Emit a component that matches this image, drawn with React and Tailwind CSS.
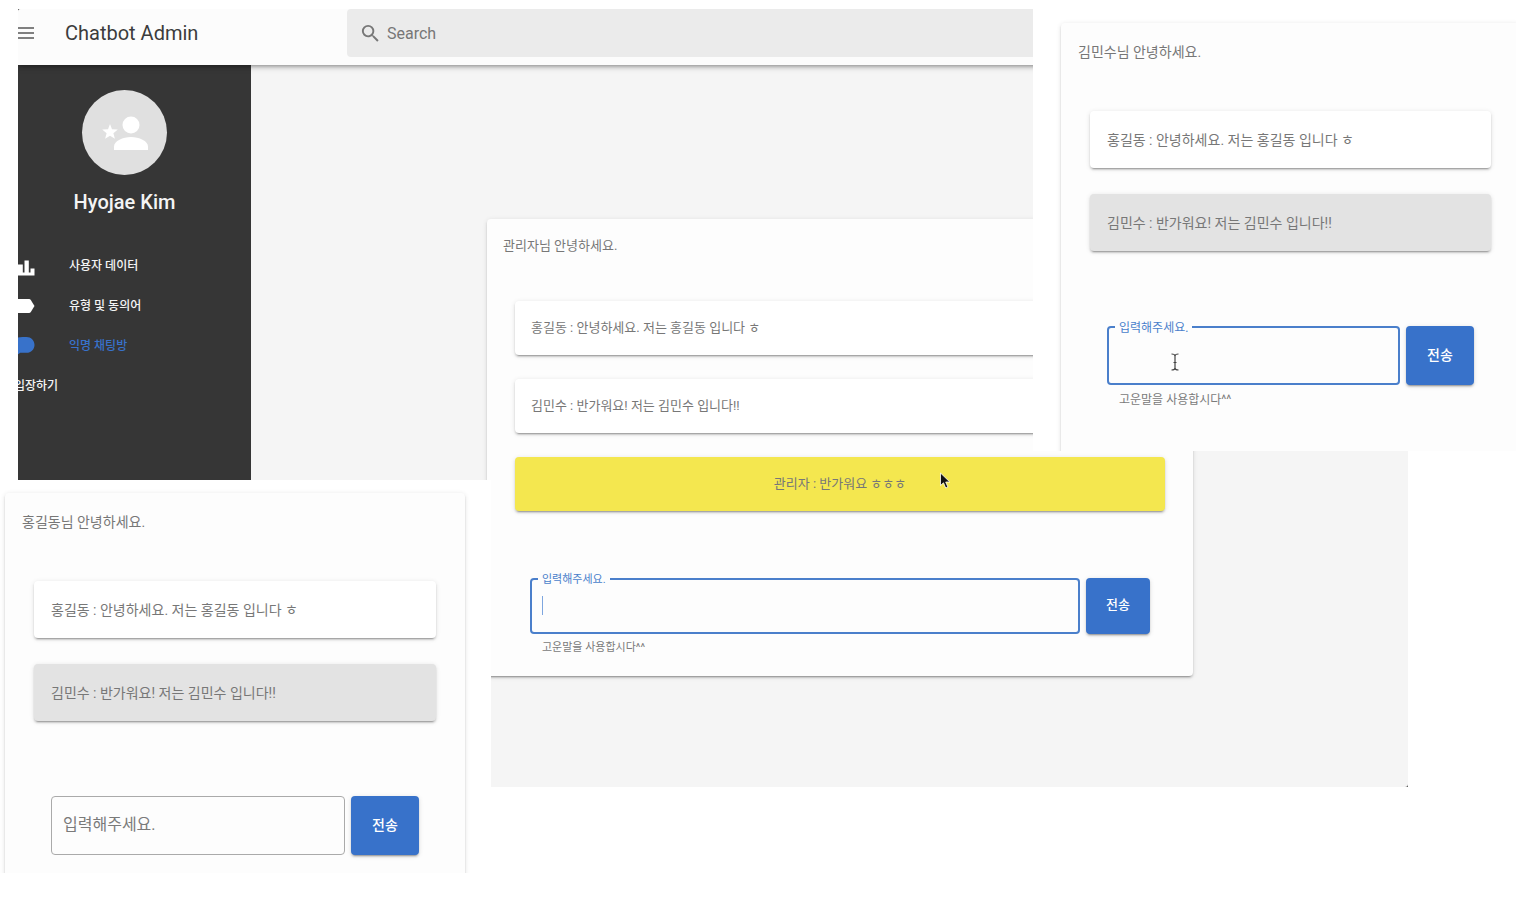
import React, { useState } from 'react';

const elevation =
  'shadow-[0_3px_1px_-2px_rgba(0,0,0,0.2),0_2px_2px_0_rgba(0,0,0,0.14),0_1px_5px_0_rgba(0,0,0,0.12)]';

const hong = { id: 1, text: '홍길동 : 안녕하세요. 저는 홍길동 입니다 ㅎ' };
const kim = { id: 2, text: '김민수 : 반가워요! 저는 김민수 입니다!!' };
const admin = { id: 3, text: '관리자 : 반가워요 ㅎㅎㅎ' };

const menu = [
  { icon: 'poll', label: '사용자 데이터' },
  { icon: 'label', label: '유형 및 동의어' },
  { icon: 'chat', label: '익명 채팅방', active: true },
];

const iconPaths = {
  poll: 'M2 21.500V14H5V18.500H7.500V10.500H12.300V18.500H14V6.500H18.300V18.500H20V14.500H24V21.500Z',
  label: 'M2 5H18.600C19.300 5 19.900 5.300 20.300 5.900L24 12L20.300 18.100C19.900 18.700 19.300 19 18.600 19H2Z',
  chat: 'M12 3C5.400 3 0 6.500 0 11C0 13.600 1.600 15.800 4.200 17.200C4.200 18.500 3.200 20.500 1.500 22C4.500 21.500 8 20.500 9.700 18.800H16C20.500 18.800 24 15.400 24 11C24 6.500 20.500 3 16 3Z',
};

function MessageInput({ id, compact, focused, caret }) {
  const [value, setValue] = useState('');
  const floating = focused || value !== '';

  return (
    <form className="flex items-start gap-1.5" onSubmit={(e) => e.preventDefault()}>
      <div className="relative min-w-0 flex-1">
        <input
          id={id}
          type="text"
          value={value}
          onChange={(e) => setValue(e.target.value)}
          className={`block w-full rounded-[4px] bg-transparent px-3 text-base text-gray-600 outline-none ${
            compact ? 'h-14' : 'h-[59px]'
          } ${focused ? 'border-2 border-[#4a7fcb]' : 'border border-[#aaaaaa]'}`}
        />
        <label
          htmlFor={id}
          className={
            floating
              ? `absolute -top-1.5 left-2 bg-[#fdfdfd] pl-1 pr-1 leading-4 text-[#4a7fcb] ${
                  compact ? 'text-[11px]' : 'text-xs'
                }`
              : 'absolute left-3 top-[17px] text-base leading-6 text-[#7a7a7a]'
          }
        >
          입력해주세요.
        </label>
        {caret && <span className="absolute left-3 top-[18px] h-[19px] w-px bg-[#7ea6df]" />}
        {focused && (
          <p className={`pl-3 leading-4 text-[#7a7a7a] ${compact ? 'pt-1.5 text-[11px]' : 'pt-[7px] text-xs'}`}>
            고운말을 사용합시다^^
          </p>
        )}
      </div>
      <button
        type="submit"
        className={`rounded-[4px] bg-[#3872ca] pb-0.5 font-medium text-white ${elevation} ${
          compact ? 'h-14 w-16 text-[13px]' : 'h-[59px] w-[68px] text-sm'
        }`}
      >
        전송
      </button>
    </form>
  );
}

function ChatRoom({ id, name, messages, compact, focused, caret }) {
  return (
    <section
      className={`rounded-[4px] bg-[#fdfdfd] text-[#777777] ${elevation} ${
        compact ? 'px-7 pt-[17px] pb-5 text-[13px]' : 'px-[29px] pt-[19px] pb-14 text-sm'
      }`}
    >
      <h2 className="-ml-3 leading-5">{name}님 안녕하세요.</h2>
      <ul className={compact ? 'mt-[45px] space-y-6' : 'mt-[49px] space-y-[26px]'}>
        {messages.map((m) => (
          <li
            key={m.id}
            className={`flex items-center rounded-[4px] ${elevation} ${
              compact ? 'h-[54px] px-4' : 'h-[57px] px-[17px]'
            } ${m.color || 'bg-white'}`}
          >
            {m.text}
          </li>
        ))}
      </ul>
      <div className={compact ? 'mt-[67px] px-[15px]' : 'mt-[75px] px-[17px]'}>
        <MessageInput id={id} compact={compact} focused={focused} caret={caret} />
      </div>
    </section>
  );
}

function Header() {
  return (
    <header className="relative z-10 flex h-14 items-start bg-[#fcfcfc] shadow-[0_2px_4px_-1px_rgba(0,0,0,0.35),0_3px_6px_0_rgba(0,0,0,0.14)]">
      <button type="button" aria-label="menu" className="mt-[18px] w-4">
        <svg viewBox="0 0 16 12" className="h-3 w-4" fill="#808080">
          <path d="M0 0H16V2H0ZM0 5H16V7H0ZM0 10H16V12H0Z" />
        </svg>
      </button>
      <h1 className="ml-[31px] mt-2.5 w-[282px] text-xl leading-7 text-[#3c3c3c]">Chatbot Admin</h1>
      <div className="flex h-12 flex-1 items-center rounded-[4px] bg-[#ebebeb] pl-3">
        <svg viewBox="0 0 24 24" className="h-[23px] w-[23px]" fill="#777777">
          <path d="M15.5 14h-.79l-.28-.27A6.47 6.47 0 0 0 16 9.5 6.5 6.5 0 1 0 9.5 16c1.61 0 3.09-.59 4.23-1.57l.27.28v.79l5 4.99L20.49 19l-4.99-5zm-6 0C7.01 14 5 11.99 5 9.5S7.01 5 9.5 5 14 7.01 14 9.5 11.99 14 9.5 14z" />
        </svg>
        <input
          type="search"
          aria-label="Search"
          placeholder="Search"
          className="ml-[5px] flex-1 bg-transparent pt-0.5 text-base placeholder-[#777777] outline-none"
        />
      </div>
    </header>
  );
}

function Sidebar() {
  return (
    <aside className="w-[233px] shrink-0 overflow-hidden bg-[#363636] text-[#f4f4f4]">
      <div className="-ml-5 pt-[25px]">
        <div className="mx-auto flex h-[85px] w-[85px] items-center justify-center rounded-full bg-[#e0e0e0]">
          <svg viewBox="0 0 46 34" className="h-[34px] w-[46px]" fill="#ffffff">
            <circle cx="29" cy="9" r="8.5" />
            <path d="M12 34V30.500C12 25 21 21 29 21S46 25 46 30.500V34Z" />
            <path d="M8 8L10 13.200L15.800 13.500L11.400 17.200L12.900 22.800L8 19.700L3.100 22.800L4.600 17.200L0.200 13.500L6 13.200Z" />
          </svg>
        </div>
        <p className="mt-[13px] text-center text-xl font-medium leading-7">Hyojae Kim</p>
        <nav className="mt-[30px] text-xs font-medium">
          {menu.map((item) => (
            <a
              key={item.label}
              href="#"
              className={`flex h-10 items-center pl-3 ${item.active ? 'text-[#3872ca]' : ''}`}
            >
              <svg viewBox="0 0 24 24" className="h-6 w-[25px]" fill={item.active ? '#3872ca' : '#ffffff'}>
                <path d={iconPaths[item.icon]} />
              </svg>
              <span className="ml-[34px]">{item.label}</span>
            </a>
          ))}
          <a href="#" className="flex h-10 items-center pl-4">
            입장하기
          </a>
        </nav>
      </div>
    </aside>
  );
}

export default function App() {
  return (
    <div className="relative min-h-screen overflow-hidden bg-white pl-[18px] pr-[108px] pt-[9px] font-['Roboto','Noto_Sans_CJK_KR',sans-serif]">
      <div className="bg-[#555555]">
        <div className="overflow-hidden rounded-[3px] bg-[#f5f5f5]">
          <Header />
          <div className="flex">
            <Sidebar />
            <main className="min-w-0 flex-1 pb-[111px] pl-[236px] pr-[215px] pt-[154px]">
              <ChatRoom
                id="admin-message"
                name="관리자"
                compact
                focused
                caret
                messages={[hong, kim, { ...admin, color: 'justify-center bg-[#f4e74f]' }]}
              />
            </main>
          </div>
        </div>
      </div>

      {/* 홍길동 window */}
      <div className="absolute left-0 top-[480px] z-20 h-[434px] w-[491px] bg-white">
        <div className="h-[393px] overflow-hidden pl-[5px] pr-[26px] pt-[13px]">
          <ChatRoom id="hong-message" name="홍길동" messages={[hong, { ...kim, color: 'bg-[#e3e3e3]' }]} />
        </div>
      </div>

      {/* 김민수 window */}
      <div className="absolute right-0 top-0 z-20 h-[451px] w-[483px] overflow-hidden bg-white pl-7 pt-[23px]">
        <div className="-mr-1">
          <ChatRoom
            id="kim-message"
            name="김민수"
            focused
            messages={[hong, { ...kim, color: 'bg-[#e3e3e3]' }]}
          />
        </div>
      </div>

      {/* pointers */}
      <svg viewBox="0 0 12 18" className="absolute left-[939px] top-[472px] z-30 h-[18px] w-3">
        <path d="M1.500 1V13.500L4.500 10.800L6.700 16L8.900 15L6.700 10H10.800Z" fill="#111111" stroke="#ffffff" strokeWidth="0.8" />
      </svg>
      <svg viewBox="0 0 10 18" className="absolute left-[1170px] top-[353px] z-30 h-[18px] w-2.5">
        <path d="M1.500 1C3.500 1 5 1.500 5 3V15C5 16.500 3.500 17 1.500 17M8.500 1C6.500 1 5 1.500 5 3M5 15C5 16.500 6.500 17 8.500 17M3.500 9.500H6.500" fill="none" stroke="#444444" strokeWidth="1.200" />
      </svg>
    </div>
  );
}
